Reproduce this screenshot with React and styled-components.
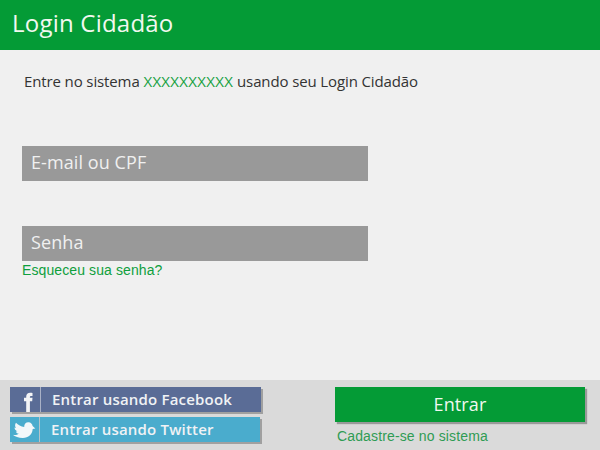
import React from "react";
import styled, { createGlobalStyle } from "styled-components";

const GlobalStyle = createGlobalStyle`
  * { box-sizing: border-box; }
  body { margin: 0; background: #f0f0f0; }
`;

const Page = styled.div`
  width: 600px;
  height: 450px;
  display: flex;
  flex-direction: column;
  overflow: hidden;
  background: #f0f0f0;
  font-family: "Open Sans", sans-serif;
`;

const Header = styled.header`
  height: 50px;
  padding: 6px 0 0 12px;
  background: #049b36;
`;

const Title = styled.h1`
  margin: 0;
  font-size: 24px;
  line-height: 34px;
  font-weight: 400;
  letter-spacing: 0.22px;
  color: #f2f8f0;
`;

const Form = styled.main`
  flex: 1;
  display: flex;
  flex-direction: column;
  align-items: flex-start;
  padding: 20px 22px 0;
`;

const Intro = styled.p`
  margin: 0 0 54px 2px;
  font-size: 15px;
  line-height: 22px;
  letter-spacing: -0.12px;
  white-space: nowrap;
  color: #333;
`;

const SystemName = styled.span`
  letter-spacing: 0.32px;
  color: #16a03f;
`;

const Field = styled.input`
  width: 346px;
  height: 35px;
  margin-bottom: ${({ $gap }) => $gap}px;
  padding: 0 9px ${({ $lift }) => $lift}px;
  border: 0;
  border-radius: 0;
  background: #999;
  color: #f0f0f0;
  font: 400 18px "Open Sans", sans-serif;
  letter-spacing: 0.08px;
  &::placeholder {
    color: #f0f0f0;
    opacity: 1;
  }
`;

const TextLink = styled.a`
  font: 14px/18px "Liberation Sans", Arial, sans-serif;
  letter-spacing: ${({ $spacing }) => $spacing || 0}px;
  color: ${({ $color }) => $color || "#0f9f3d"};
  text-decoration: none;
  white-space: nowrap;
`;

const Footer = styled.footer`
  height: 70px;
  display: flex;
  justify-content: space-between;
  padding: 7px 15px 0 10px;
  background: #dadada;
`;

const SocialList = styled.div`
  display: flex;
  flex-direction: column;
  align-items: flex-start;
  gap: 5px;
`;

const SocialButton = styled.button`
  display: flex;
  width: ${({ $width }) => $width}px;
  height: 25px;
  padding: 0;
  border: 0;
  background: ${({ $color }) => $color};
  box-shadow: 2px 2px 0 #a0a0a0;
  color: #f0f2f5;
  font: 600 15px/24px "Open Sans", sans-serif;
`;

const IconCell = styled.span`
  display: flex;
  width: ${({ $width }) => $width}px;
  height: 25px;
  border-right: 1px solid ${({ $line }) => $line};
`;

const SocialLabel = styled.span`
  padding-left: 11px;
  letter-spacing: 0.19px;
  white-space: nowrap;
`;

const Actions = styled.div`
  width: 250px;
  display: flex;
  flex-direction: column;
  gap: 5px;
`;

const SubmitButton = styled.button`
  height: 35px;
  padding: 0 0 1px;
  border: 0;
  background: #049b36;
  box-shadow: 2px 2px 1px #999;
  color: #f2f8f0;
  font: 400 18px/34px "Open Sans", sans-serif;
  letter-spacing: 0.1px;
`;

const LinkRow = styled.div`
  display: flex;
  padding-left: 2px;
`;

const FacebookIcon = () => (
  <svg width="30" height="25" viewBox="0 0 30 25" aria-hidden="true">
    <path
      fill="#f3f4f6"
      d="M16.2 25v-10.8H14v-3.4h2.2V9.7c0-2.7 1.5-4 4-4 .9 0 1.7.1 2.3.2v3h-1.2c-1 0-1.4.4-1.4 1.2v.7h2.6l-.3 3.4h-2.3V25z"
    />
  </svg>
);

const TwitterIcon = () => (
  <svg width="28" height="25" viewBox="0 0 28 25" aria-hidden="true">
    <path
      fill="#f3f8fa"
      d="M6 5.7C8 8 11 9.3 14.2 10 14 7 16 5.2 18.5 5.3c2.3.1 3.8 1.7 4.1 3.7l2.7 2.4-2.6.6C22.3 17.5 18.5 21 12.8 21 8.6 21 5 19.8 2.7 17.8c2.3.6 4.5.2 6.1-1-1.6-.2-2.6-1-3-2.2l1.6-.2c-1.9-.8-2.8-2.2-2.9-3.8L6 11C4.8 9.3 4.8 7.3 6 5.7z"
    />
  </svg>
);

export default function App() {
  return (
    <Page>
      <GlobalStyle />
      <Header>
        <Title>Login Cidadão</Title>
      </Header>
      <Form>
        <Intro>
          Entre no sistema <SystemName>XXXXXXXXXX</SystemName> usando seu Login Cidadão
        </Intro>
        <Field type="text" placeholder="E-mail ou CPF" $gap={45} $lift={3} />
        <Field type="password" placeholder="Senha" $gap={0} $lift={4} />
        <TextLink $spacing={0.1}>Esqueceu sua senha?</TextLink>
      </Form>
      <Footer>
        <SocialList>
          <SocialButton $width={251} $color="#5a6c96">
            <IconCell $width={31} $line="#a9b1c6">
              <FacebookIcon />
            </IconCell>
            <SocialLabel>Entrar usando Facebook</SocialLabel>
          </SocialButton>
          <SocialButton $width={250} $color="#4aaccd">
            <IconCell $width={30} $line="#b4c4ca">
              <TwitterIcon />
            </IconCell>
            <SocialLabel>Entrar usando Twitter</SocialLabel>
          </SocialButton>
        </SocialList>
        <Actions>
          <SubmitButton>Entrar</SubmitButton>
          <LinkRow>
            <TextLink $color="#2f9c54" $spacing={0.14}>Cadastre-se no sistema</TextLink>
          </LinkRow>
        </Actions>
      </Footer>
    </Page>
  );
}
